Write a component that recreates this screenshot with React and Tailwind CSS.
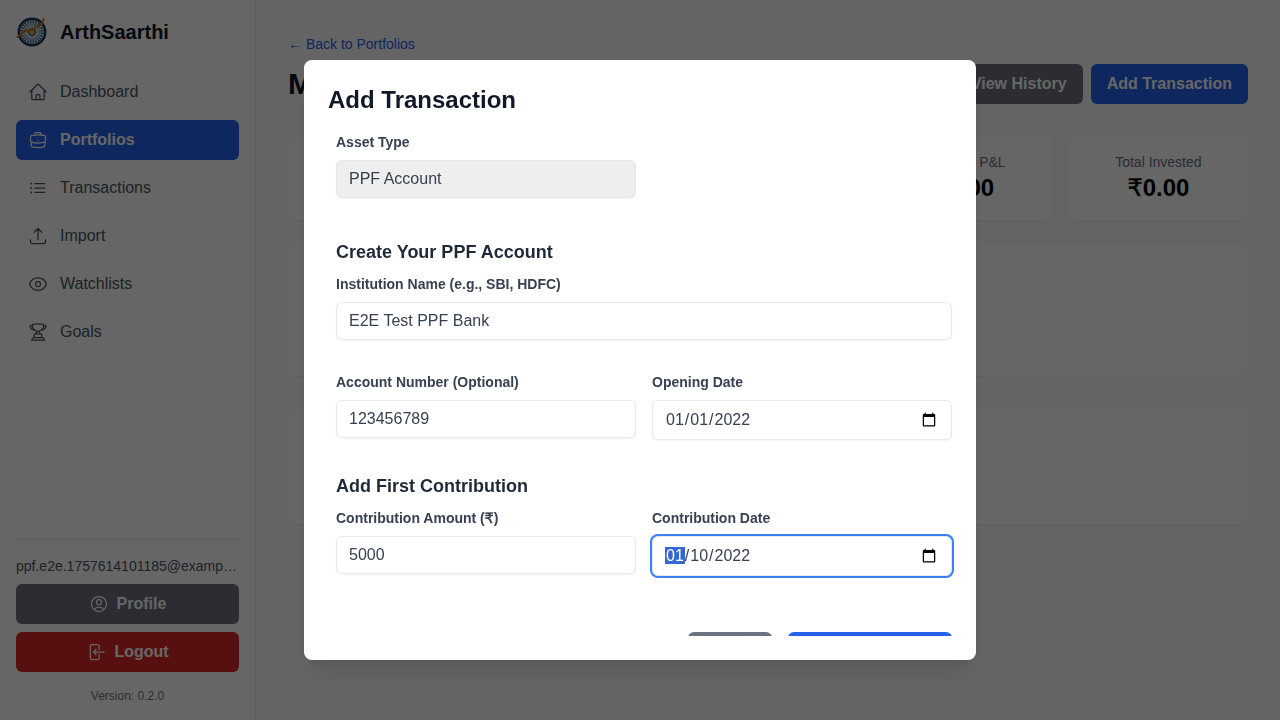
import {
  HiOutlineHome,
  HiOutlineBriefcase,
  HiOutlineListBullet,
  HiOutlineArrowUpTray,
  HiOutlineEye,
  HiOutlineTrophy,
  HiOutlineUserCircle,
  HiOutlineArrowLeftOnRectangle,
} from "react-icons/hi2";

const navItems = [
  { label: "Dashboard", icon: HiOutlineHome },
  { label: "Portfolios", icon: HiOutlineBriefcase, active: true },
  { label: "Transactions", icon: HiOutlineListBullet },
  { label: "Import", icon: HiOutlineArrowUpTray },
  { label: "Watchlists", icon: HiOutlineEye },
  { label: "Goals", icon: HiOutlineTrophy },
];

const stats = ["Current Value", "Day's P&L", "Unrealized P&L", "Realized P&L", "Total Invested"];

// the rupee sign in the picture is wider than the one Liberation Sans has
function Rupee() {
  return <span className="font-['DejaVu_Sans',sans-serif] font-normal [-webkit-text-stroke:0.5px]">₹</span>;
}

function Logo() {
  const spokes = [];
  for (let i = 0; i < 24; i++) {
    const a = (i * Math.PI) / 12;
    spokes.push(
      <line
        key={i}
        x1={16 + 4 * Math.cos(a)}
        y1={16 + 4 * Math.sin(a)}
        x2={16 + 12 * Math.cos(a)}
        y2={16 + 12 * Math.sin(a)}
        stroke="#f1f5f9"
        strokeWidth="1.1"
      />
    );
  }
  return (
    <svg viewBox="0 0 32 32" className="w-8 h-8 shrink-0">
      <circle cx="16" cy="16" r="13.5" fill="#3f6680" stroke="#0f2f4d" strokeWidth="1.8" />
      {spokes}
      <circle cx="16" cy="16" r="3.2" fill="#e0b04c" stroke="#12304f" strokeWidth="0.7" />
      <path d="M1 21.5 L9 15 L17 13.5 L22 9.5 L25.5 8.5 L28 2" fill="none" stroke="#c9761f" strokeWidth="2" />
    </svg>
  );
}

function Sidebar() {
  return (
    <aside className="w-64 h-screen shrink-0 flex flex-col bg-white border-r border-[#e5e7eb] p-4">
      <div className="flex items-center gap-3 mb-6">
        <Logo />
        <span className="text-xl font-bold text-[#111827]">ArthSaarthi</span>
      </div>
      <nav className="flex flex-col gap-2">
        {navItems.map(({ label, icon: Icon, active }) => (
          <a
            key={label}
            href="#"
            className={
              active
                ? "flex items-center gap-3 h-10 px-3 rounded-md bg-[#2563eb] text-white font-semibold"
                : "flex items-center gap-3 h-10 px-3 rounded-md text-[#4b5563]"
            }
          >
            <Icon className="w-5 h-5" />
            {label}
          </a>
        ))}
      </nav>
      <div className="mt-auto border-t border-[#e5e7eb] pt-4">
        <p className="text-sm text-[#4b5563] truncate mb-2">ppf.e2e.1757614101185@example.com</p>
        <button className="w-full h-10 flex items-center justify-center gap-2 rounded-md bg-[#6b7280] text-white font-semibold">
          <HiOutlineUserCircle className="w-5 h-5" />
          Profile
        </button>
        <button className="w-full h-10 mt-2 flex items-center justify-center gap-2 rounded-md bg-[#dc2626] text-white font-semibold">
          <HiOutlineArrowLeftOnRectangle className="w-5 h-5" />
          Logout
        </button>
        <p className="mt-4 text-xs text-center text-[#6b7280]">Version: 0.2.0</p>
      </div>
    </aside>
  );
}

function Main() {
  return (
    <main className="flex-1 min-w-0 p-8">
      <div className="mb-2">
        <a href="#" className="text-sm text-[#2563eb]">← Back to Portfolios</a>
      </div>
      <div className="flex items-center justify-between mb-8">
        <h1 className="text-3xl font-bold text-[#111827]">My PPF Portfolio</h1>
        <div className="flex gap-2">
          <button className="px-4 py-2 rounded-md bg-[#6b7280] text-white font-semibold">View History</button>
          <button className="px-4 py-2 rounded-md bg-[#2563eb] text-white font-semibold">Add Transaction</button>
        </div>
      </div>
      <div className="grid grid-cols-5 gap-4 mb-6">
        {stats.map((label) => (
          <div key={label} className="h-[84px] bg-white rounded-lg shadow-[0_1px_2px_rgba(0,0,0,0.05)] p-4 text-center">
            <p className="text-sm leading-5 text-[#6b7280]">{label}</p>
            <p className="text-2xl leading-8 font-bold text-black"><Rupee />0.00</p>
          </div>
        ))}
      </div>
      <div className="h-[132px] bg-white rounded-lg shadow-[0_1px_2px_rgba(0,0,0,0.05)] mb-8" />
      <div className="h-[116px] bg-white rounded-lg shadow-[0_1px_2px_rgba(0,0,0,0.05)]" />
    </main>
  );
}

function Field({ label, children }) {
  return (
    <div>
      <label className="block h-5 text-sm font-semibold text-[#374151] mb-2">{label}</label>
      {children}
    </div>
  );
}

const inputClass =
  "block w-full h-[38px] px-3 rounded-md border border-[#e5e7eb] shadow-[0_1px_2px_rgba(0,0,0,0.05)] text-[#374151] outline-none";
const dateClass =
  "block w-full h-10 px-3 rounded-md bg-white border border-[#e5e7eb] shadow-[0_1px_2px_rgba(0,0,0,0.05)] text-[#374151] outline-none focus:ring-2 focus:ring-[#3b82f6]";

function TransactionModal() {
  return (
    <div className="fixed inset-0 bg-black/60 flex items-center justify-center">
      <div className="w-[672px] h-[600px] flex flex-col bg-white rounded-lg shadow-xl py-6 pl-6 pr-5">
        <h2 className="text-2xl font-bold text-[#111827] mb-4">Add Transaction</h2>
        <form className="flex-1 min-h-0 overflow-hidden pl-2 pr-1">
          <div className="grid grid-cols-2 gap-4 mb-10">
            <Field label="Asset Type">
              <input className={inputClass + " bg-[#eeeeee]"} disabled defaultValue="PPF Account" />
            </Field>
          </div>
          <h3 className="text-lg font-semibold text-[#1f2937] mb-2">Create Your PPF Account</h3>
          <div className="mb-8">
            <Field label="Institution Name (e.g., SBI, HDFC)">
              <input className={inputClass + " bg-white"} defaultValue="E2E Test PPF Bank" />
            </Field>
          </div>
          <div className="grid grid-cols-2 gap-4 mb-8">
            <Field label="Account Number (Optional)">
              <input className={inputClass + " bg-white"} defaultValue="123456789" />
            </Field>
            <Field label="Opening Date">
              <input type="date" className={dateClass} defaultValue="2022-01-01" />
            </Field>
          </div>
          <h3 className="text-lg font-semibold text-[#1f2937] mb-2">Add First Contribution</h3>
          <div className="grid grid-cols-2 gap-4 mb-14">
            <Field label={<>Contribution Amount (<Rupee />)</>}>
              <input className={inputClass + " bg-white"} defaultValue="5000" />
            </Field>
            <Field label="Contribution Date">
              <input type="date" autoFocus className={dateClass} defaultValue="2022-01-10" />
            </Field>
          </div>
          <div className="flex justify-end gap-4">
            <button type="button" className="w-[84px] h-10 rounded-md bg-[#6b7280] text-white font-semibold">Cancel</button>
            <button type="button" className="w-[164px] h-10 rounded-md bg-[#2563eb] text-white font-semibold">Save Transaction</button>
          </div>
        </form>
      </div>
    </div>
  );
}

export default function App() {
  return (
    <div className="flex h-screen overflow-hidden bg-[#fafbfc] font-['Liberation_Sans',Arial,sans-serif]">
      <Sidebar />
      <Main />
      <TransactionModal />
    </div>
  );
}
